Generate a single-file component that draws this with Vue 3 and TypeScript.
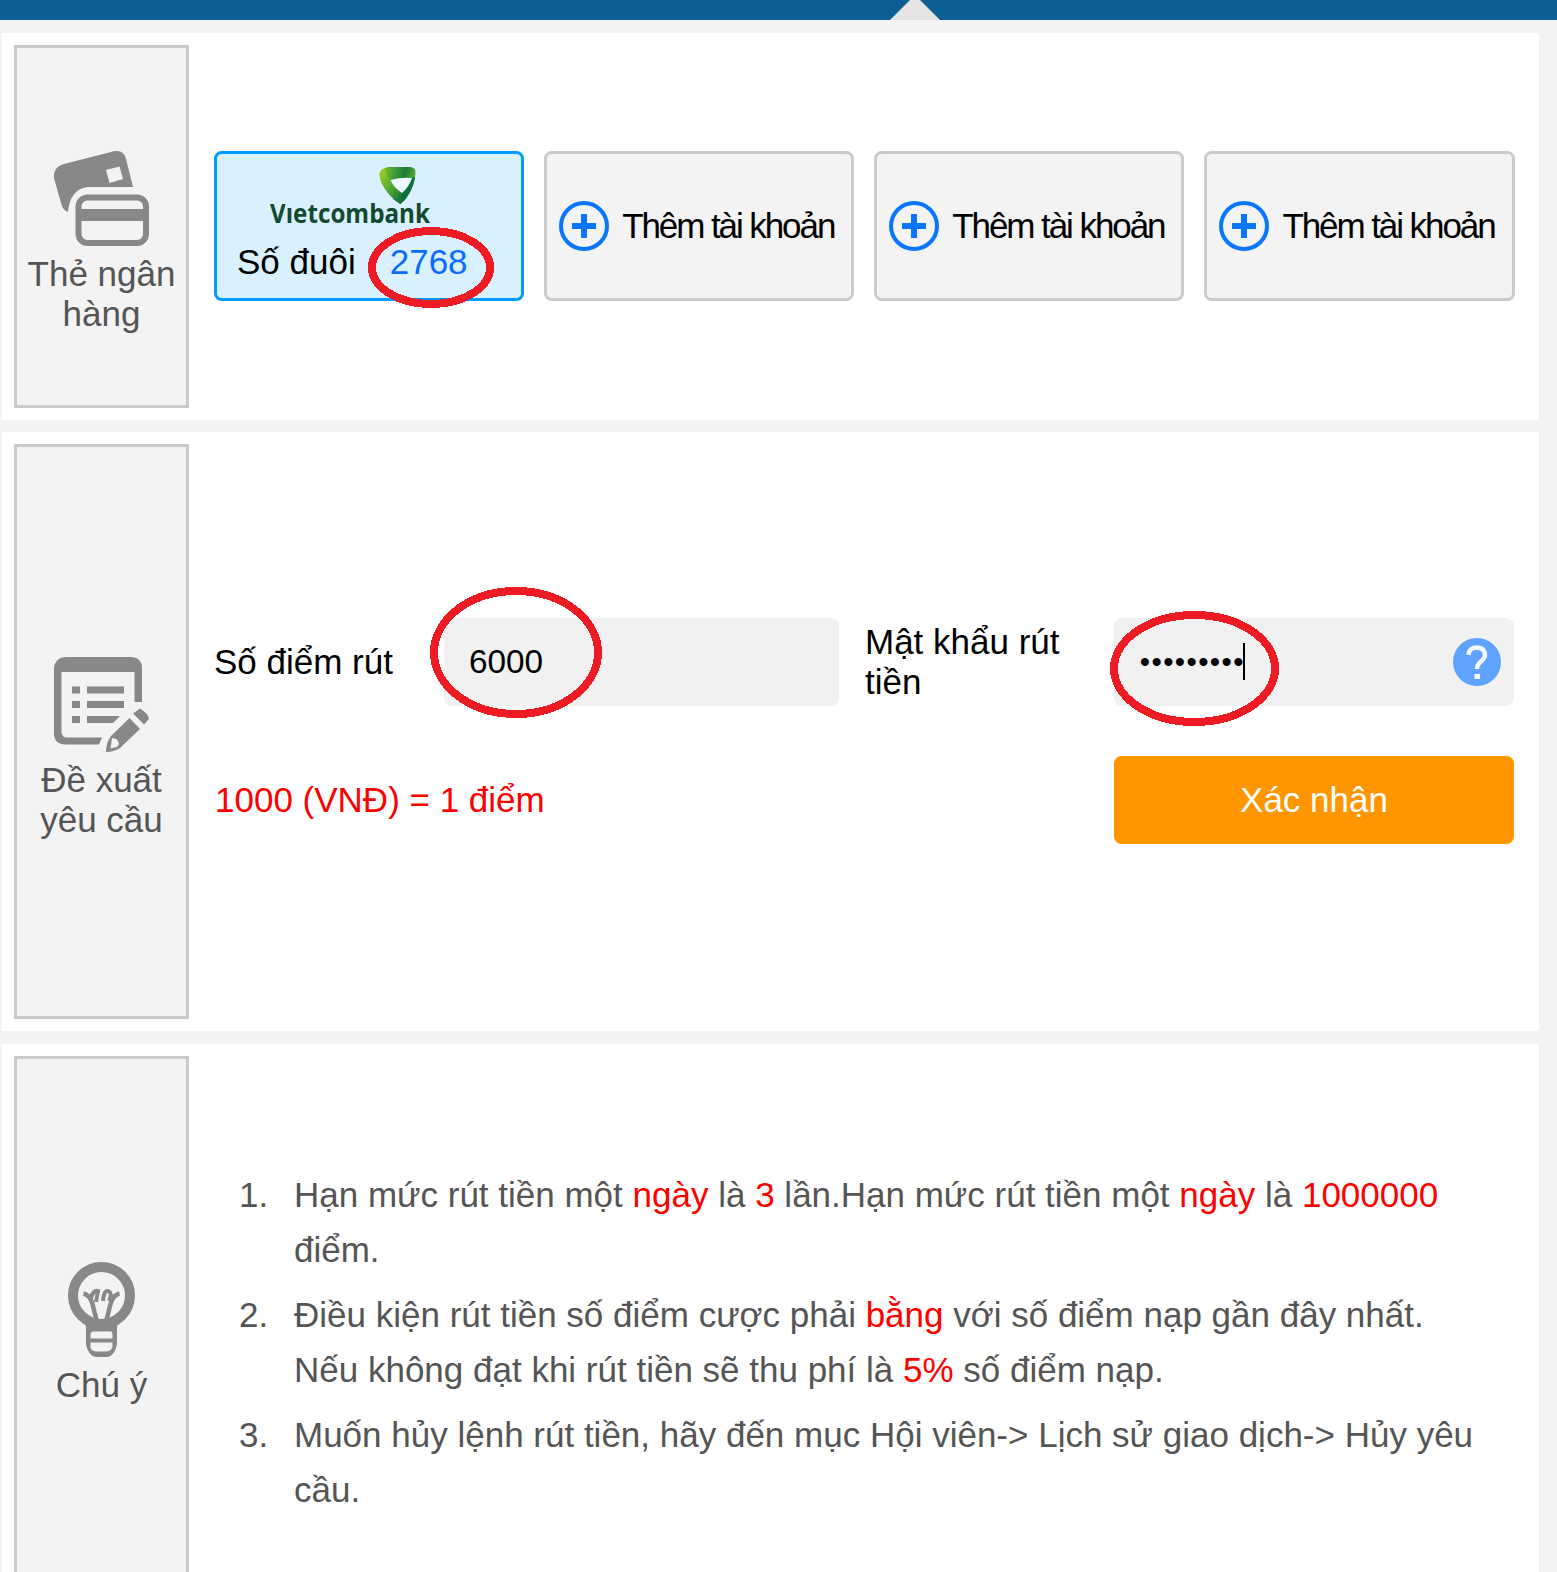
<script setup lang="ts">
import { ref } from 'vue'

interface Part {
  text: string
  hot?: boolean
}

const emptySlots = [1, 2, 3]
const label = 'Thêm tài khoản'
const amount = ref('6000')
const password = ref('•••••••••')

const notes: Part[][] = [
  [
    { text: 'Hạn mức rút tiền một ' },
    { text: 'ngày', hot: true },
    { text: ' là ' },
    { text: '3', hot: true },
    { text: ' lần.Hạn mức rút tiền một ' },
    { text: 'ngày', hot: true },
    { text: ' là ' },
    { text: '1000000', hot: true },
    { text: ' điểm.' },
  ],
  [
    { text: 'Điều kiện rút tiền số điểm cược phải ' },
    { text: 'bằng', hot: true },
    { text: ' với số điểm nạp gần đây nhất. Nếu không đạt khi rút tiền sẽ thu phí là ' },
    { text: '5%', hot: true },
    { text: ' số điểm nạp.' },
  ],
  [{ text: 'Muốn hủy lệnh rút tiền, hãy đến mục Hội viên-> Lịch sử giao dịch-> Hủy yêu cầu.' }],
]
</script>

<template>
  <div class="page">
    <header class="bar">
      <svg class="pointer" width="50" height="20" viewBox="0 0 50 20">
        <path d="M0 20 L20 0 H30 L50 20Z" fill="#e4e4e4" />
      </svg>
    </header>

    <section class="panel cards-panel">
      <aside class="side side-cards">
        <svg width="95" height="95" viewBox="0 0 95 95">
          <path
            d="M10 13 L57 1 Q69 -3 72 8 L79 36 H34 Q16 38 14 61 Q9 60 7 52 L0 27 Q-1 16 10 13Z M52 19 L55.500 32 L69 28 L65.500 15.500Z"
            fill="#888" fill-rule="evenodd"
          />
          <rect x="24.500" y="46.500" width="67.500" height="45.500" rx="9" fill="none" stroke="#888" stroke-width="6" />
          <rect x="24" y="58" width="69" height="12" fill="#888" />
        </svg>
        <span>Thẻ ngân hàng</span>
      </aside>
      <div class="slots">
        <div class="slot chosen">
          <svg class="logo" width="166" height="60" viewBox="0 0 166 60">
            <defs>
              <linearGradient id="leaf" x1="0" y1="0" x2="1" y2="0.3">
                <stop offset="0" stop-color="#8fca1e" />
                <stop offset="0.450" stop-color="#3f9a38" />
                <stop offset="0.700" stop-color="#1f7a3c" />
                <stop offset="1" stop-color="#5cae2c" />
              </linearGradient>
              <linearGradient id="stem" x1="0" y1="0" x2="1" y2="1">
                <stop offset="0" stop-color="#a5d61c" />
                <stop offset="0.550" stop-color="#4fa832" />
                <stop offset="1" stop-color="#0d6b3f" />
              </linearGradient>
            </defs>
            <path d="M119 1 H141 Q147 1.500 146.500 7 Q146 15 143 22 Q138 33 131.500 38 Q126 35 119 27 Q111 17 110.500 8 Q111 3 119 1Z" fill="url(#leaf)" />
            <path d="M142.500 12 L146 11 Q145 18 143 22 Q138 33 131.500 38 L124 33 L132.500 26.500 Q139 22 142.500 12Z" fill="#0f6f43" />
            <path d="M110.500 8 Q111 4 116 2 Q118 14 132.500 27 L131 37.500 Q126 35 119 27 Q111 17 110.500 8Z" fill="url(#stem)" />
            <path d="M121.500 14 Q132 11 143 12 Q140 21 133 27 Q125 22 121.500 14Z" fill="#eefaff" />
            <text x="1" y="57" textLength="160" lengthAdjust="spacingAndGlyphs" class="brand">Vietcombank</text>
            <rect x="16.500" y="34" width="7" height="7.500" fill="#d9f0ff" />
          </svg>
          <div class="tail"><span>Số đuôi</span><b>2768</b></div>
        </div>
        <div v-for="n in emptySlots" :key="n" class="slot">
          <svg width="50" height="50" viewBox="0 0 50 50">
            <circle cx="25" cy="25" r="23" fill="none" stroke="#0a76ff" stroke-width="4" />
            <path d="M25 13V37M13 25H37" stroke="#0a76ff" stroke-width="6" />
          </svg>
          <span class="add">{{ label }}</span>
        </div>
      </div>
    </section>

    <section class="panel form-panel">
      <aside class="side side-form">
        <svg width="95" height="95" viewBox="0 0 95 95">
          <path
            d="M11 0 H78 Q88 1 88 11 V45 H80.500 V15 H7.500 V75 Q8 80.500 13 80.500 H48 L45 87.500 H11 Q0 87 0 76 V11 Q1 1 11 0Z"
            fill="#888"
          />
          <path d="M18 29.500h8v7h-8zM18 44h8v7h-8zM18 59h8v7h-8zM33 29.500h37v7H33zM33 44h37v7H33zM33 59H66L59 66H33z" fill="#888" />
          <path d="M86 51.500 Q95 57 95 62 L90 67.500 L79 56.500Z M75.500 61 L86 72 L66 91 Q60 95 52 95 Q52 86 57 79Z" fill="#888" />
          <path d="M58 81 Q64 81 65 87 L63 90 L56.500 91.500Z" fill="#f2f2f2" />
        </svg>
        <span>Đề xuất<br />yêu cầu</span>
      </aside>
      <div class="form">
        <div class="row">
          <label class="l1">Số điểm rút</label>
          <div class="field f1">{{ amount }}</div>
          <label class="l2">Mật khẩu rút tiền</label>
          <div class="field f2">
            <span class="secret">{{ password }}</span><i class="caret"></i>
            <svg class="help" width="48" height="48" viewBox="0 0 48 48">
              <circle cx="24" cy="24" r="24" fill="#5fa2ff" />
              <path d="M15.500 17 Q16 9.500 24 9.500 Q32 10 32 17 Q32 20 28.500 23 Q24 26.500 24 31" fill="none" stroke="#f3f7ff" stroke-width="4.500" />
              <rect x="21.500" y="36" width="5.500" height="5" fill="#f3f7ff" />
            </svg>
          </div>
        </div>
        <div class="row second">
          <span class="rate">1000 (VNĐ) = 1 điểm</span>
          <button type="button">Xác nhận</button>
        </div>
      </div>
    </section>

    <section class="panel notes-panel">
      <aside class="side side-notes">
        <svg width="67" height="95" viewBox="0 0 67 95">
          <circle cx="33.500" cy="33.500" r="28.500" fill="none" stroke="#888" stroke-width="10" />
          <path d="M17 58 H50 L49 66 V82 Q47 94 39 95 H28 Q20 94 18 82 V66Z" fill="#888" />
          <path d="M24 69.500H43.500L44.500 72V76.500H22.500V72Z M22.500 80.500H44.500V85Q43 89 39 89.500H28Q23 89 22.500 85Z" fill="#f2f2f2" />
          <path d="M15.500 31.500 Q22 33 24.500 42 L29 60 M51.500 31.500 Q45 33 42.500 42 L38 60" fill="none" stroke="#888" stroke-width="4.500" />
          <path d="M23 36 Q25 28 30 29 L28 40 M35 39 Q36 28 40 29 Q45 31 41 39" fill="none" stroke="#888" stroke-width="4" />
        </svg>
        <span>Chú ý</span>
      </aside>
      <ol class="notes">
        <li v-for="(parts, i) in notes" :key="i">
          <span class="num">{{ i + 1 }}.</span>
          <p><span v-for="(p, k) in parts" :key="k" :class="{ hot: p.hot }">{{ p.text }}</span></p>
        </li>
      </ol>
    </section>

    <svg class="marks" width="1557" height="1572" viewBox="0 0 1557 1572" shape-rendering="crispEdges">
      <g fill="none" stroke="#ed1c24" stroke-width="8">
        <ellipse cx="431" cy="267.500" rx="59" ry="36.500" />
        <ellipse cx="516" cy="652.500" rx="82" ry="61.500" />
        <ellipse cx="1194.500" cy="668.500" rx="80.500" ry="53.500" />
      </g>
    </svg>
  </div>
</template>

<style>
body {
  margin: 0;
  background: #f3f3f3;
}
</style>

<style scoped>
.page {
  position: relative;
  box-sizing: border-box;
  width: 1557px;
  height: 1572px;
  overflow: hidden;
  background: #f3f3f3;
  font-family: 'Liberation Sans', Arial, sans-serif;
  font-size: 35px;
  line-height: 40px;
  color: #000;
}
.bar {
  height: 20px;
  margin-bottom: 13px;
  padding-left: 890px;
  background: #0c5e94;
}
.pointer {
  display: block;
}
.panel {
  display: flex;
  box-sizing: border-box;
  width: 1537px;
  margin: 0 0 12px 2px;
  padding: 12px;
  background: #fff;
}
.cards-panel {
  height: 387px;
}
.form-panel {
  height: 599px;
  margin-bottom: 13px;
}
.notes-panel {
  height: 620px;
}
.side {
  flex: none;
  display: flex;
  flex-direction: column;
  align-items: center;
  gap: 8px;
  box-sizing: border-box;
  width: 175px;
  border: 3px solid #cbcbcb;
  background: #f3f3f3;
  color: #555;
  text-align: center;
}
.side svg {
  flex: none;
}
.side-cards {
  padding-top: 103px;
}
.side-form {
  padding-top: 210px;
}
.side-notes {
  padding-top: 203px;
}
.slots {
  display: grid;
  grid-template-columns: repeat(4, 1fr);
  gap: 20px;
  align-self: flex-start;
  width: 1300.600px;
  margin: 106px 0 0 25px;
}
.slot {
  display: flex;
  align-items: center;
  box-sizing: border-box;
  height: 150px;
  padding-left: 12px;
  border: 3px solid #cbcbcb;
  border-radius: 7.500px;
  background: #f3f3f3;
}
.add {
  margin-left: 13px;
  letter-spacing: -2.080px;
  white-space: nowrap;
}
.chosen {
  flex-direction: column;
  align-items: flex-start;
  padding: 12px 0 0 20px;
  border-color: #009cff;
  background: #d9f0ff;
}
.logo {
  margin-left: 32px;
  overflow: visible;
}
.brand {
  font-family: 'Open Sans', sans-serif;
  font-size: 27px;
  font-weight: 700;
  fill: #12492f;
}
.tail {
  display: flex;
  gap: 34px;
  margin-top: 16px;
  white-space: nowrap;
}
.tail b {
  font-weight: 400;
  color: #0a6cff;
}
.form {
  margin: 174px 0 0 25px;
  width: 1300px;
}
.row {
  display: flex;
  align-items: center;
  height: 88px;
}
.l1 {
  width: 230px;
}
.l2 {
  width: 220px;
  margin-left: 26px;
}
.field {
  display: flex;
  align-items: center;
  box-sizing: border-box;
  height: 88px;
  padding-left: 25px;
  border-radius: 7.500px;
  background: #f1f1f1;
  font-size: 33.330px;
}
.f1 {
  width: 395px;
}
.f2 {
  width: 400px;
  margin-left: 29px;
}
.secret {
  margin-left: 0.800px;
  font-size: 29.500px;
  letter-spacing: 1.340px;
}
.caret {
  width: 2px;
  height: 37px;
  margin: 0 0 1px -2px;
  background: #000;
}
.help {
  margin: 0 13px 0 auto;
}
.second {
  justify-content: space-between;
  margin-top: 50px;
}
.rate {
  padding-left: 1px;
}
.rate,
.hot {
  color: #f00;
}
button {
  width: 400px;
  height: 88px;
  padding: 0;
  border: 0;
  border-radius: 7.500px;
  background: #ff9600;
  color: #fff;
  font: inherit;
}
.notes {
  margin: 111px 0 0 50px;
  padding: 0;
  width: 1240px;
  list-style: none;
  color: #555;
  line-height: 55px;
}
.notes li {
  display: flex;
  margin-bottom: 10px;
}
.num {
  width: 55px;
}
.notes p {
  flex: 1;
  margin: 0;
}
.marks {
  position: absolute;
  top: 0;
  left: 0;
  pointer-events: none;
}
</style>
